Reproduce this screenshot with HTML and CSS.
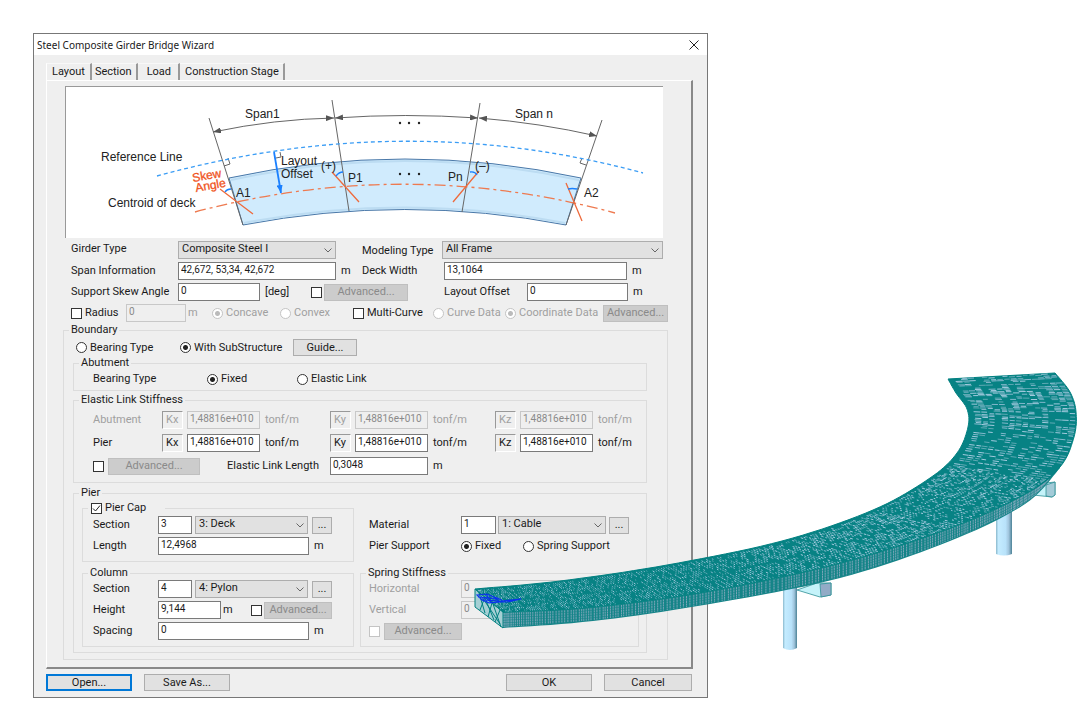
FILE: index.html
```html
<!DOCTYPE html>
<html lang="en">
<head>
    <meta charset="UTF-8">
    <meta name="viewport" content="width=device-width, initial-scale=1.0">
    <title>Steel Composite Girder Bridge Wizard</title>
    <link rel="stylesheet" href="styles.css">
</head>
<body>
    <main class="dialog">
        <header class="title-bar">
            <h1>Steel Composite Girder Bridge Wizard</h1>
            <button class="close" aria-label="Close">
                <svg width="10" height="10" viewBox="0 0 10 10"><path d="M.5 .5l9 9M9.5 .5l-9 9" stroke="#222" fill="none"/></svg>
            </button>
        </header>

        <nav class="tabs">
            <button class="tab active">Layout</button>
            <button class="tab">Section</button>
            <button class="tab tab-load">Load</button>
            <button class="tab">Construction Stage</button>
        </nav>

        <form class="panel">
            <svg class="diagram" viewBox="66 87 597 151">
                <defs>
                    <marker id="arrow" viewBox="0 0 8 6" refX="8" refY="3" markerWidth="8" markerHeight="6" markerUnits="userSpaceOnUse" orient="auto-start-reverse"><path d="M0 0L8 3L0 6z" fill="#555"/></marker>
                    <marker id="arrow-blue" viewBox="0 0 8 6" refX="8" refY="3" markerWidth="8" markerHeight="6" markerUnits="userSpaceOnUse" orient="auto"><path d="M0 0L8 3L0 6z" fill="#1a80ff"/></marker>
                </defs>
                <!-- deck -->
                <path d="M229 178Q405 140 581 178L566 225Q405 194 243 225z" fill="#d0ebfd" stroke="#4a78a8"/>
                <path d="M231 180Q405 142 579 180" fill="none" stroke="#bcdcf2" stroke-width="2"/>
                <path d="M244 223Q405 192 565 223" fill="none" stroke="#bcdcf2" stroke-width="2"/>
                <!-- radial lines and span dimensions -->
                <g fill="none" stroke="#666">
                    <path d="M209 118L243 225M332 100L349 211M480 103L462 212M602 120L566 225"/>
                    <g marker-start="url(#arrow)" marker-end="url(#arrow)">
                        <path d="M213 132Q275 119 334 118"/>
                        <path d="M335 118Q405 113 478 118"/>
                        <path d="M479 118Q540 123 597 136"/>
                    </g>
                    <path d="M228 158l2 6-6 2M280 152l1 5-5 1M582 158l-2 5 6 2"/>
                </g>
                <path d="M157 176Q405 108 643 173" fill="none" stroke="#3b9df5" stroke-width="1.3" stroke-dasharray="4 3"/>
                <path d="M195 212Q405 156 615 213" fill="none" stroke="#ee7a50" stroke-width="1.3" stroke-dasharray="11 4 3 4"/>
                <path d="M220 189L253 214M332 172L359 202M479 171L453 202M566 183L582 221" fill="none" stroke="#ee6a3c" stroke-width="1.3"/>
                <path d="M225 192q2-3 6-3M336 176q3-4 7-4M470 172q5-1 7 3M568 189q4-1 9 0" fill="none" stroke="#1a80ff" stroke-width="1.3"/>
                <path d="M274 152L281 193" stroke="#1a80ff" stroke-width="1.8" marker-end="url(#arrow-blue)"/>
                <g fill="#222">
                    <circle cx="400" cy="123" r="1.2"/><circle cx="409" cy="123" r="1.2"/><circle cx="419" cy="123" r="1.2"/>
                    <circle cx="400" cy="174" r="1.2"/><circle cx="409" cy="174" r="1.2"/><circle cx="419" cy="174" r="1.2"/>
                </g>
                <g class="diagram-text">
                    <text x="245" y="118">Span1</text>
                    <text x="515" y="118">Span n</text>
                    <text x="101" y="161">Reference Line</text>
                    <text x="108" y="207">Centroid of deck</text>
                    <text x="281" y="165">Layout</text>
                    <text x="281" y="178">Offset</text>
                    <text x="321" y="170">(+)</text>
                    <text x="348" y="182">P1</text>
                    <text x="448" y="181">Pn</text>
                    <text x="475" y="170">(–)</text>
                    <text x="236" y="197">A1</text>
                    <text x="584" y="197">A2</text>
                    <g class="skew-text">
                        <text transform="translate(193 182) rotate(-10)">Skew</text>
                        <text transform="translate(196 192) rotate(-10)">Angle</text>
                    </g>
                </g>
            </svg>

            <div class="row row-girder">
                <label for="girder">Girder Type</label>
                <select id="girder"><option>Composite Steel I</option></select>
                <span></span>
                <label for="modeling" class="low">Modeling Type</label>
                <select id="modeling"><option>All Frame</option></select>
            </div>
            <div class="row row-span">
                <label for="span">Span Information</label>
                <input type="text" id="span" value="42,672, 53,34, 42,672">
                <span class="unit">m</span>
                <label for="deck-width">Deck Width</label>
                <input type="text" id="deck-width" value="13,1064">
                <span class="unit">m</span>
            </div>
            <div class="row row-skew">
                <label for="skew">Support Skew Angle</label>
                <input type="text" id="skew" value="0">
                <span class="unit">[deg]</span>
                <input type="checkbox" aria-label="Advanced skew angle">
                <button type="button" disabled>Advanced...</button>
                <span></span>
                <label for="offset">Layout Offset</label>
                <input type="text" id="offset" value="0">
                <span class="unit">m</span>
            </div>
            <div class="row row-curve">
                <label class="check"><input type="checkbox">Radius</label>
                <input type="text" value="0" aria-label="Radius" disabled>
                <span class="unit tight off">m</span>
                <label class="check off"><input type="radio" name="curve" checked disabled>Concave</label>
                <label class="check off"><input type="radio" name="curve" disabled>Convex</label>
                <label class="check"><input type="checkbox">Multi-Curve</label>
                <label class="check off"><input type="radio" name="data" disabled>Curve Data</label>
                <label class="check off"><input type="radio" name="data" checked disabled>Coordinate Data</label>
                <button type="button" disabled>Advanced...</button>
            </div>

            <fieldset class="boundary">
                <legend>Boundary</legend>
                <div class="row row-boundary">
                    <label class="check"><input type="radio" name="boundary">Bearing Type</label>
                    <label class="check"><input type="radio" name="boundary" checked>With SubStructure</label>
                    <button type="button">Guide...</button>
                </div>

                <fieldset class="abutment">
                    <legend>Abutment</legend>
                    <div class="row row-bearing">
                        <span>Bearing Type</span>
                        <label class="check"><input type="radio" name="bearing" checked>Fixed</label>
                        <label class="check"><input type="radio" name="bearing">Elastic Link</label>
                    </div>
                </fieldset>

                <fieldset class="elastic">
                    <legend>Elastic Link Stiffness</legend>
                    <div class="row row-stiff off">
                        <span>Abutment</span>
                        <label class="axis" for="akx">Kx</label>
                        <input type="text" id="akx" value="1,48816e+010" disabled>
                        <span class="unit">tonf/m</span>
                        <label class="axis" for="aky">Ky</label>
                        <input type="text" id="aky" value="1,48816e+010" disabled>
                        <span class="unit">tonf/m</span>
                        <label class="axis" for="akz">Kz</label>
                        <input type="text" id="akz" value="1,48816e+010" disabled>
                        <span class="unit">tonf/m</span>
                    </div>
                    <div class="row row-stiff">
                        <span>Pier</span>
                        <label class="axis" for="pkx">Kx</label>
                        <input type="text" id="pkx" value="1,48816e+010">
                        <span class="unit">tonf/m</span>
                        <label class="axis" for="pky">Ky</label>
                        <input type="text" id="pky" value="1,48816e+010">
                        <span class="unit">tonf/m</span>
                        <label class="axis" for="pkz">Kz</label>
                        <input type="text" id="pkz" value="1,48816e+010">
                        <span class="unit">tonf/m</span>
                    </div>
                    <div class="row row-length">
                        <input type="checkbox" aria-label="Advanced link stiffness">
                        <button type="button" disabled>Advanced...</button>
                        <span></span>
                        <label for="link-length">Elastic Link Length</label>
                        <input type="text" id="link-length" value="0,3048">
                        <span class="unit">m</span>
                    </div>
                </fieldset>

                <fieldset class="pier">
                    <legend>Pier</legend>
                    <div class="pier-grid">
                        <fieldset class="pier-cap">
                            <legend class="cap-legend"><label class="check"><input type="checkbox" checked>Pier Cap</label></legend>
                            <div class="row row-section">
                                <label for="cap-section">Section</label>
                                <input type="text" id="cap-section" value="3">
                                <select aria-label="Cap section name"><option>3: Deck</option></select>
                                <button type="button">...</button>
                            </div>
                            <div class="row row-wide">
                                <label for="cap-length">Length</label>
                                <input type="text" id="cap-length" value="12,4968">
                                <span class="unit">m</span>
                            </div>
                        </fieldset>
                        <div class="material">
                            <div class="row row-material">
                                <label for="material">Material</label>
                                <input type="text" id="material" value="1">
                                <select aria-label="Material name"><option>1: Cable</option></select>
                                <button type="button">...</button>
                            </div>
                            <div class="row row-support">
                                <span>Pier Support</span>
                                <label class="check"><input type="radio" name="support" checked>Fixed</label>
                                <label class="check"><input type="radio" name="support">Spring Support</label>
                            </div>
                        </div>
                        <fieldset class="column">
                            <legend>Column</legend>
                            <div class="row row-section">
                                <label for="col-section">Section</label>
                                <input type="text" id="col-section" value="4">
                                <select aria-label="Column section name"><option>4: Pylon</option></select>
                                <button type="button">...</button>
                            </div>
                            <div class="row row-height">
                                <label for="height">Height</label>
                                <input type="text" id="height" value="9,144">
                                <span class="unit tight">m</span>
                                <input type="checkbox" aria-label="Advanced height">
                                <button type="button" disabled>Advanced...</button>
                            </div>
                            <div class="row row-wide">
                                <label for="spacing">Spacing</label>
                                <input type="text" id="spacing" value="0">
                                <span class="unit">m</span>
                            </div>
                        </fieldset>
                        <fieldset class="spring">
                            <legend>Spring Stiffness</legend>
                            <div class="row row-spring off">
                                <label for="horizontal">Horizontal</label>
                                <input type="text" id="horizontal" value="0" disabled>
                            </div>
                            <div class="row row-spring off">
                                <label for="vertical">Vertical</label>
                                <input type="text" id="vertical" value="0" disabled>
                            </div>
                            <div class="row row-spring-adv">
                                <input type="checkbox" aria-label="Advanced spring" disabled>
                                <button type="button" disabled>Advanced...</button>
                            </div>
                        </fieldset>
                    </div>
                </fieldset>
            </fieldset>
        </form>

        <footer class="actions">
            <button class="default">Open...</button>
            <button>Save As...</button>
            <span class="spacer"></span>
            <button>OK</button>
            <button>Cancel</button>
        </footer>
    </main>

    <svg class="bridge" viewBox="470 368 612 288" aria-hidden="true">
        <defs>
            <linearGradient id="column">
                <stop offset="0" stop-color="#8ab8cc"/><stop offset=".15" stop-color="#c4ecff"/>
                <stop offset=".6" stop-color="#b8e2fa"/><stop offset=".8" stop-color="#a0c4dc"/><stop offset="1" stop-color="#4c8296"/>
            </linearGradient>
        </defs>
        <path d="M783 585V648Q790 652 797 648V585z" fill="url(#column)"/>
        <path d="M996 508V554Q1004 557 1012 554V500z" fill="url(#column)"/>
        <g stroke="#2e8f96" stroke-width=".8">
            <path d="M797 590L817 583L831 583V595L820 597z" fill="#c5f3fa"/>
            <path d="M820 584L831 583V595L821 597z" fill="#92abc6"/>
            <path d="M1033 495L1046 483L1055 482V495L1052 497z" fill="#c5f3fa"/>
            <path d="M1046 485L1055 482V495L1052 497L1046 496z" fill="#a3cbd8"/>
        </g>
        <g id="deck"></g>
        <path d="M477 595l10-1 7 3 5 5-10 1-7-3zM478 597l13 1M481 599l17-1M483 601l16-1M488 603l14-2 19-2-14 3-12 0M494 597l8 3M486 594l5 8" fill="none" stroke="#0a30f0" stroke-width="1.2"/>
    </svg>

    <script src="bridge.js"></script>
</body>
</html>
```

FILE: styles.css
```css
* {
    box-sizing: border-box;
}
body {
    margin: 0;
    padding: 33px 20px 20px 33px;
    background: white;
    color: #1a1a1a;
    font-family: Roboto, "Liberation Sans", sans-serif;
    font-size: 11px;
    line-height: 14px;
    position: relative;
}
.dialog {
    width: 100%;
    max-width: 675px;
    background: #efefef;
    border: 1px solid #777;
}
.title-bar {
    display: flex;
    justify-content: space-between;
    align-items: center;
    height: 21px;
    padding: 0 8px 0 3px;
    background: white;
}
.title-bar h1 {
    margin: 0;
    font-family: "Noto Sans", sans-serif;
    font-size: 10px;
    font-weight: normal;
}
button, input, select {
    font: inherit;
    color: inherit;
    margin: 0;
}
.title-bar .close {
    display: flex;
    padding: 0;
    border: none;
    background: none;
}

/* tabs */
.tabs {
    display: flex;
    padding: 8px 0 0 12px;
}
.tab {
    height: 17px;
    padding: 0 4px 0 3px;
    border: none;
    border-top: 1px solid #f8f8f8;
    border-right: 2px solid #999;
    background: none;
}
.tab.active {
    padding: 0 5px;
    border-left: 1px solid white;
}
.tab-load {
    padding: 0 7px 0 9px;
}
.tab:last-child {
    padding-left: 5px;
}
.panel {
    margin: 0 14px 0 12px;
    padding: 5px 23px 7px 16px;
    border-style: solid;
    border-width: 1px 2px 2px 1px;
    border-color: white #888 #888 white;
}

/* layout diagram */
.diagram {
    display: block;
    width: calc(100% - 7px);
    margin: 0 5px 3px 2px;
    background: white;
    border-top: 1px solid #999;
    border-left: 1px solid #999;
}
.diagram-text {
    font-family: "Liberation Sans", Arial, sans-serif;
    font-size: 12px;
    fill: #222;
}
.skew-text {
    fill: #f0531c;
    stroke: #f0531c;
    stroke-width: .3px;
}

/* rows */
.row {
    display: grid;
    align-items: center;
    height: 18px;
    margin-bottom: 3px;
    white-space: nowrap;
}
.row-girder {
    grid-template-columns: 107px 158px 26px 80px 1fr;
    padding: 0 5px 0 8px;
}
.row-girder select {
    padding-bottom: 3px;
}
.row-girder label {
    padding-bottom: 2px;
}
.row-girder .low {
    padding: 2px 0 0;
}
.row-span {
    grid-template-columns: 107px 158px 26px 82px 1fr 36px;
    padding: 0 5px 0 8px;
}
.row-skew {
    grid-template-columns: 107px 82px 51px 13px 84px 36px 83px 1fr 35px;
    padding: 0 5px 0 8px;
}
.row-curve {
    grid-template-columns: 55px 60px 26px 68px 73px 80px 72px 1fr 65px;
    padding-left: 8px;
    margin-bottom: 1px;
}
.row-boundary {
    grid-template-columns: 104px 113px 64px;
    height: 17px;
    margin: 2px 0 0;
    padding-left: 12px;
}
.row-bearing {
    grid-template-columns: 114px 90px 1fr;
    margin-bottom: 2px;
    padding-left: 19px;
}
.row-stiff {
    grid-template-columns: 69px 25px 1fr 70px 25px 1fr 67px 25px 1fr 53px;
    margin-bottom: 5px;
    padding-left: 19px;
}
.row-length {
    grid-template-columns: 15px 92px 27px 103px 98px 1fr;
    margin-bottom: 7px;
    padding-left: 19px;
}
.row-section {
    grid-template-columns: 65px 34px 1fr 20px;
    padding: 0 21px 0 10px;
}
.row-section select {
    margin: 0 4px 0 3px;
}
.row-wide {
    grid-template-columns: 65px 1fr 44px;
    padding-left: 10px;
    margin-bottom: 6px;
}
.row-height {
    grid-template-columns: 65px 63px 30px 13px 1fr;
    padding: 0 21px 0 10px;
}
.row-material {
    grid-template-columns: 92px 35px 1fr 20px;
    padding: 0 10px 0 9px;
}
.row-material select {
    margin: 0 3px 0 2px;
}
.row-support {
    grid-template-columns: 92px 62px 1fr;
    padding-left: 9px;
}
.row-spring {
    grid-template-columns: 92px 120px;
    padding-left: 8px;
}
.row-spring-adv {
    grid-template-columns: 15px 78px;
    padding-left: 8px;
    margin-bottom: 6px;
}
.unit {
    padding-left: 5px;
}
.unit.tight {
    padding-left: 2px;
}
.off {
    color: #a0a0a0;
}
.axis {
    height: 18px;
    margin-right: 4px;
    padding: 1px 0 0 3px;
    border-style: solid;
    border-width: 1px;
    border-color: #999 white white #999;
}

/* group boxes */
fieldset {
    min-width: 0;
    margin: 0;
    padding: 0;
    border: 1px solid #dcdcdc;
}
legend {
    height: 14px;
    margin-left: 5px;
    padding: 0 2px;
}
.boundary {
    padding-bottom: 6px;
}
.abutment, .elastic, .pier {
    margin: 0 20px 0 9px;
}
.elastic {
    margin-top: 2px;
}
.elastic legend + .row {
    margin-top: 4px;
}
.pier {
    margin-top: 3px;
    padding-bottom: 5px;
}
.pier-grid {
    display: grid;
    grid-template-columns: 272px 1fr;
    column-gap: 6px;
    row-gap: 4px;
    padding: 1px 7px 0 8px;
}
.cap-legend {
    padding: 0 19px 0 3px;
}
.pier-cap legend + .row {
    margin-top: 1px;
}
.material {
    padding-top: 15px;
}

/* controls */
input[type="text"] {
    width: 100%;
    min-width: 0;
    height: 18px;
    padding: 0 2px 3px;
    border: 1px solid #7a7a7a;
    border-radius: 0;
    background: white;
    font-size: 10px;
}
input[type="text"]:disabled {
    border-color: #c8c8c8;
    background: #efefef;
    color: #8a8a8a;
}
select {
    appearance: none;
    min-width: 0;
    height: 18px;
    padding: 0 18px 2px 3px;
    border: 1px solid #adadad;
    border-radius: 0;
    background: #e1e1e1 url("data:image/svg+xml,%3Csvg xmlns='http://www.w3.org/2000/svg' width='8' height='5'%3E%3Cpath d='M.5 .5L4 4L7.5 .5' fill='none' stroke='%23666'/%3E%3C/svg%3E") no-repeat right 3px center;
}
.row button, .actions button {
    height: 17px;
    padding: 0;
    border: 1px solid #adadad;
    background: #e1e1e1;
    line-height: 14px;
}
.row button:disabled {
    border-color: #bfbfbf;
    background: #ccc;
    color: #8a8a8a;
}
.check {
    display: flex;
    align-items: center;
    gap: 3px;
}
input[type="checkbox"], input[type="radio"] {
    appearance: none;
    flex: none;
    width: 11px;
    height: 11px;
    border: 1px solid #333;
    background: white;
}
input[type="checkbox"]:checked {
    background: white url("data:image/svg+xml,%3Csvg xmlns='http://www.w3.org/2000/svg' width='9' height='9'%3E%3Cpath d='M1 4.5L3.5 7L8 1.5' fill='none' stroke='%23222'/%3E%3C/svg%3E") no-repeat center;
}
input[type="radio"] {
    border-radius: 50%;
}
input[type="radio"]:checked {
    background: radial-gradient(circle, #222 0 2px, white 3px);
}
input[type="checkbox"]:disabled, input[type="radio"]:disabled {
    border-color: #c4c4c4;
}
input[type="radio"]:checked:disabled {
    background: radial-gradient(circle, #bbb 0 2px, white 3px);
}

.actions {
    display: flex;
    gap: 12px;
    padding: 5px 15px 6px 12px;
}
.actions button {
    width: 86px;
}
.actions button:last-child {
    width: 88px;
}
.actions .default {
    border: 2px solid #0078d7;
    line-height: 12px;
}
.spacer {
    flex: 1;
}

/* bridge model, drawn over the dialog */
.bridge {
    position: absolute;
    left: 470px;
    top: 368px;
    width: 612px;
    height: 288px;
    pointer-events: none;
}
```

FILE: bridge.js
```javascript
const deck = document.getElementById('deck');

// edges of the deck, from the near end to the far end
const inner = [[475,589],[560,581],[667,565],[782,541],[873,510],[930,478],[957,453],[968,427],[967,409],[956,393],[948,379]];
const outer = [[503,612],[593,607],[710,591],[840,563],[950,528],[1025,494],[1060,467],[1074,437],[1076,412],[1070,392],[1055,373]];
const bottom = [[503,628],[593,621],[710,604],[840,578],[950,541],[1025,504],[1060,468]];

let seed = 7;
function random() {
    seed = (seed * 16807) % 2147483647;
    return seed / 2147483647;
}

function pointAt(points, u) {
    const i = Math.min(Math.floor(u), points.length - 2);
    const t = u - i;
    const p1 = points[i], p2 = points[i + 1];
    const p0 = points[i - 1] || p1, p3 = points[i + 2] || p2;
    return [0, 1].map(k => 0.5 * (2 * p1[k] + (p2[k] - p0[k]) * t
        + (2 * p0[k] - 5 * p1[k] + 4 * p2[k] - p3[k]) * t * t
        + (3 * p1[k] - p0[k] - 3 * p2[k] + p3[k]) * t * t * t));
}

function trace(points) {
    const list = [];
    for (let u = 0; u <= points.length - 1; u += 0.1) list.push(pointAt(points, u));
    list.push(points[points.length - 1]);
    return list;
}

function addPath(d, attrs) {
    const path = document.createElementNS('http://www.w3.org/2000/svg', 'path');
    path.setAttribute('d', d);
    Object.entries(attrs).forEach(([name, value]) => path.setAttribute(name, value));
    deck.appendChild(path);
}

function mix(a, b, v) {
    return [a[0] + (b[0] - a[0]) * v, a[1] + (b[1] - a[1]) * v];
}

const fmt = p => p[0].toFixed(1) + ' ' + p[1].toFixed(1);

// side face
addPath('M' + trace(bottom).concat(trace(outer.slice(0, 7)).reverse()).map(fmt).join('L') + 'z', { fill: '#158488' });
let hatch = '';
for (let u = 0.01; u < 5.6; u += 0.018 + random() * 0.014) {
    const a = pointAt(outer, u), b = pointAt(bottom, u);
    hatch += 'M' + fmt([a[0], a[1] + 1]) + 'L' + fmt([a[0], b[1] - 1]);
}
addPath(hatch, { stroke: '#86a9bd', 'stroke-width': 0.9, 'stroke-dasharray': '2 .5', fill: 'none' });

// end face with its braces
addPath('M475 589L503 612V628L475 607z', { fill: '#a5cfd4', stroke: '#008080' });
addPath('M479 593l6 20M485 597l-5 13M485 598l9 22M492 603l-4 14M493 604l8 23M500 610l-5 12M478 591l22 33', { stroke: '#008080', fill: 'none' });

// top surface
addPath('M' + trace(inner).concat(trace(outer).reverse()).map(fmt).join('L') + 'z', { fill: '#078284', stroke: '#008080' });
const shades = ['#5fa9b4', '#82b8cc', '#a2cade'];
const dashes = ['', '', ''];
let u = 0.03;
while (u < 9.95) {
    const a = pointAt(inner, u), b = pointAt(outer, u);
    const far = u > 5.5;
    const lanes = far ? 16 : u > 4 ? 26 : 18;
    const band = far ? 0.35 + random() * 0.5 : 0.62;
    for (let j = 1; j < lanes; j++) {
        const v = j / lanes;
        const girder = Math.abs((v * 4) % 1 - 0.5) > 0.42;
        if (random() > (girder ? band * 0.4 : band)) continue;
        const start = mix(a, b, v + (random() - 0.5) * 0.02);
        const end = mix(a, b, Math.min(0.99, v + (far ? 0.85 : 0.65) / lanes));
        dashes[Math.floor(random() * 3)] += 'M' + fmt(start) + 'L' + fmt(end);
    }
    u += u < 4 ? 0.022 : u < 5.5 ? 0.036 : 0.075;
}
dashes.forEach((d, i) => addPath(d, { stroke: shades[i], 'stroke-width': 1, fill: 'none' }));
```
